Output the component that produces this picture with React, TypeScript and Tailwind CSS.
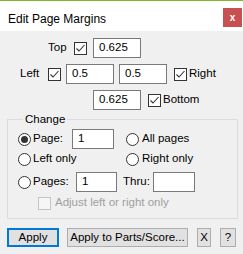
import React from "react";

function Check({ checked = true, disabled = false }: { checked?: boolean; disabled?: boolean }) {
    return (
        <span
            className={`flex w-[13px] h-[13px] shrink-0 border ${disabled ? "border-[#c4c4c4] bg-[#f6f6f6]" : "border-[#333333] bg-white"}`}
        >
            {checked && (
                <svg width="11" height="11" viewBox="0 0 11 11">
                    <polyline points="1.5,5.5 4,8 9.5,2" fill="none" stroke="#333333" strokeWidth="1.1" />
                </svg>
            )}
        </span>
    );
}

function Radio({ checked = false }: { checked?: boolean }) {
    return (
        <span className="flex items-center justify-center w-[13px] h-[13px] shrink-0 rounded-full border border-[#333333] bg-white">
            {checked && <span className="w-[7px] h-[7px] rounded-full bg-[#333333]" />}
        </span>
    );
}

function Field({ value, w }: { value: string; w: string }) {
    return (
        <div className={`${w} h-[20px] shrink-0 border border-[#7a7a7a] bg-white pl-[5px] flex items-center`}>
            {value}
        </div>
    );
}

export default function App() {
    return (
        <div
            className="w-[243px] h-[254px] bg-[#f0f0f0] text-[11.5px] text-black border-t border-[#7fb52e] overflow-hidden"
            style={{ fontFamily: '"Liberation Sans", Arial, sans-serif' }}
        >
            {/* Title bar */}
            <div className="h-[30px] bg-white flex items-start justify-between">
                <span className="ml-[8px] mt-[9px] text-[12px]">Edit Page Margins</span>
                <button className="mt-[7px] mr-[1px] w-[19px] h-[19px] bg-[#c75050] text-white font-bold text-[10px] flex items-center justify-center leading-none">
                    x
                </button>
            </div>

            {/* Top */}
            <div className="mt-[7px] pl-[48px] flex items-center">
                <span className="w-[26px]">Top</span>
                <Check />
                <div className="ml-[6px]">
                    <Field value="0.625" w="w-[48px]" />
                </div>
            </div>

            {/* Left / Right */}
            <div className="mt-[6px] pl-[20px] flex items-center">
                <span className="w-[28px]">Left</span>
                <Check />
                <div className="ml-[5px]">
                    <Field value="0.5" w="w-[48px]" />
                </div>
                <div className="ml-[5px]">
                    <Field value="0.5" w="w-[48px]" />
                </div>
                <div className="ml-[7px]">
                    <Check />
                </div>
                <span className="ml-[2px]">Right</span>
            </div>

            {/* Bottom */}
            <div className="mt-[6px] pl-[93px] flex items-center">
                <Field value="0.625" w="w-[48px]" />
                <div className="ml-[7px]">
                    <Check />
                </div>
                <span className="ml-[2px]">Bottom</span>
            </div>

            {/* Change group */}
            <fieldset className="mt-[1px] ml-[7px] w-[231px] border border-[#dcdcdc] pl-[10px] pb-[5px]">
                <legend className="ml-[5px] px-[2px] leading-[16px]">Change</legend>

                <div className="mt-[2px] h-[20px] flex items-center">
                    <Radio checked />
                    <span className="ml-[2px] w-[39px]">Page:</span>
                    <Field value="1" w="w-[42px]" />
                    <div className="ml-[12px]">
                        <Radio />
                    </div>
                    <span className="ml-[3px]">All pages</span>
                </div>

                <div className="h-[20px] flex items-center">
                    <Radio />
                    <span className="ml-[2px] w-[93px]">Left only</span>
                    <Radio />
                    <span className="ml-[3px]">Right only</span>
                </div>

                <div className="mt-[3px] h-[20px] flex items-center">
                    <Radio />
                    <span className="ml-[2px] w-[43px]">Pages:</span>
                    <Field value="1" w="w-[41px]" />
                    <span className="ml-[6px] w-[30px]">Thru:</span>
                    <Field value="" w="w-[42px]" />
                </div>

                <div className="mt-[1px] h-[20px] pl-[20px] flex items-center">
                    <Check checked={false} disabled />
                    <span className="ml-[4px] text-[#a0a0a0]">Adjust left or right only</span>
                </div>
            </fieldset>

            {/* Buttons */}
            <div className="mt-[9px] pl-[7px] flex items-center">
                <button className="w-[52px] h-[19px] border-2 border-[#0078d7] bg-[#e1e1e1] flex items-center justify-center">
                    Apply
                </button>
                <button className="ml-[8px] w-[121px] h-[19px] border border-[#adadad] bg-[#e1e1e1] flex items-center justify-center">
                    Apply to Parts/Score...
                </button>
                <button className="ml-[9px] w-[14px] h-[19px] border border-[#adadad] bg-[#e1e1e1] flex items-center justify-center">
                    X
                </button>
                <button className="ml-[9px] w-[16px] h-[19px] border border-[#adadad] bg-[#e1e1e1] flex items-center justify-center">
                    ?
                </button>
            </div>
        </div>
    );
}
